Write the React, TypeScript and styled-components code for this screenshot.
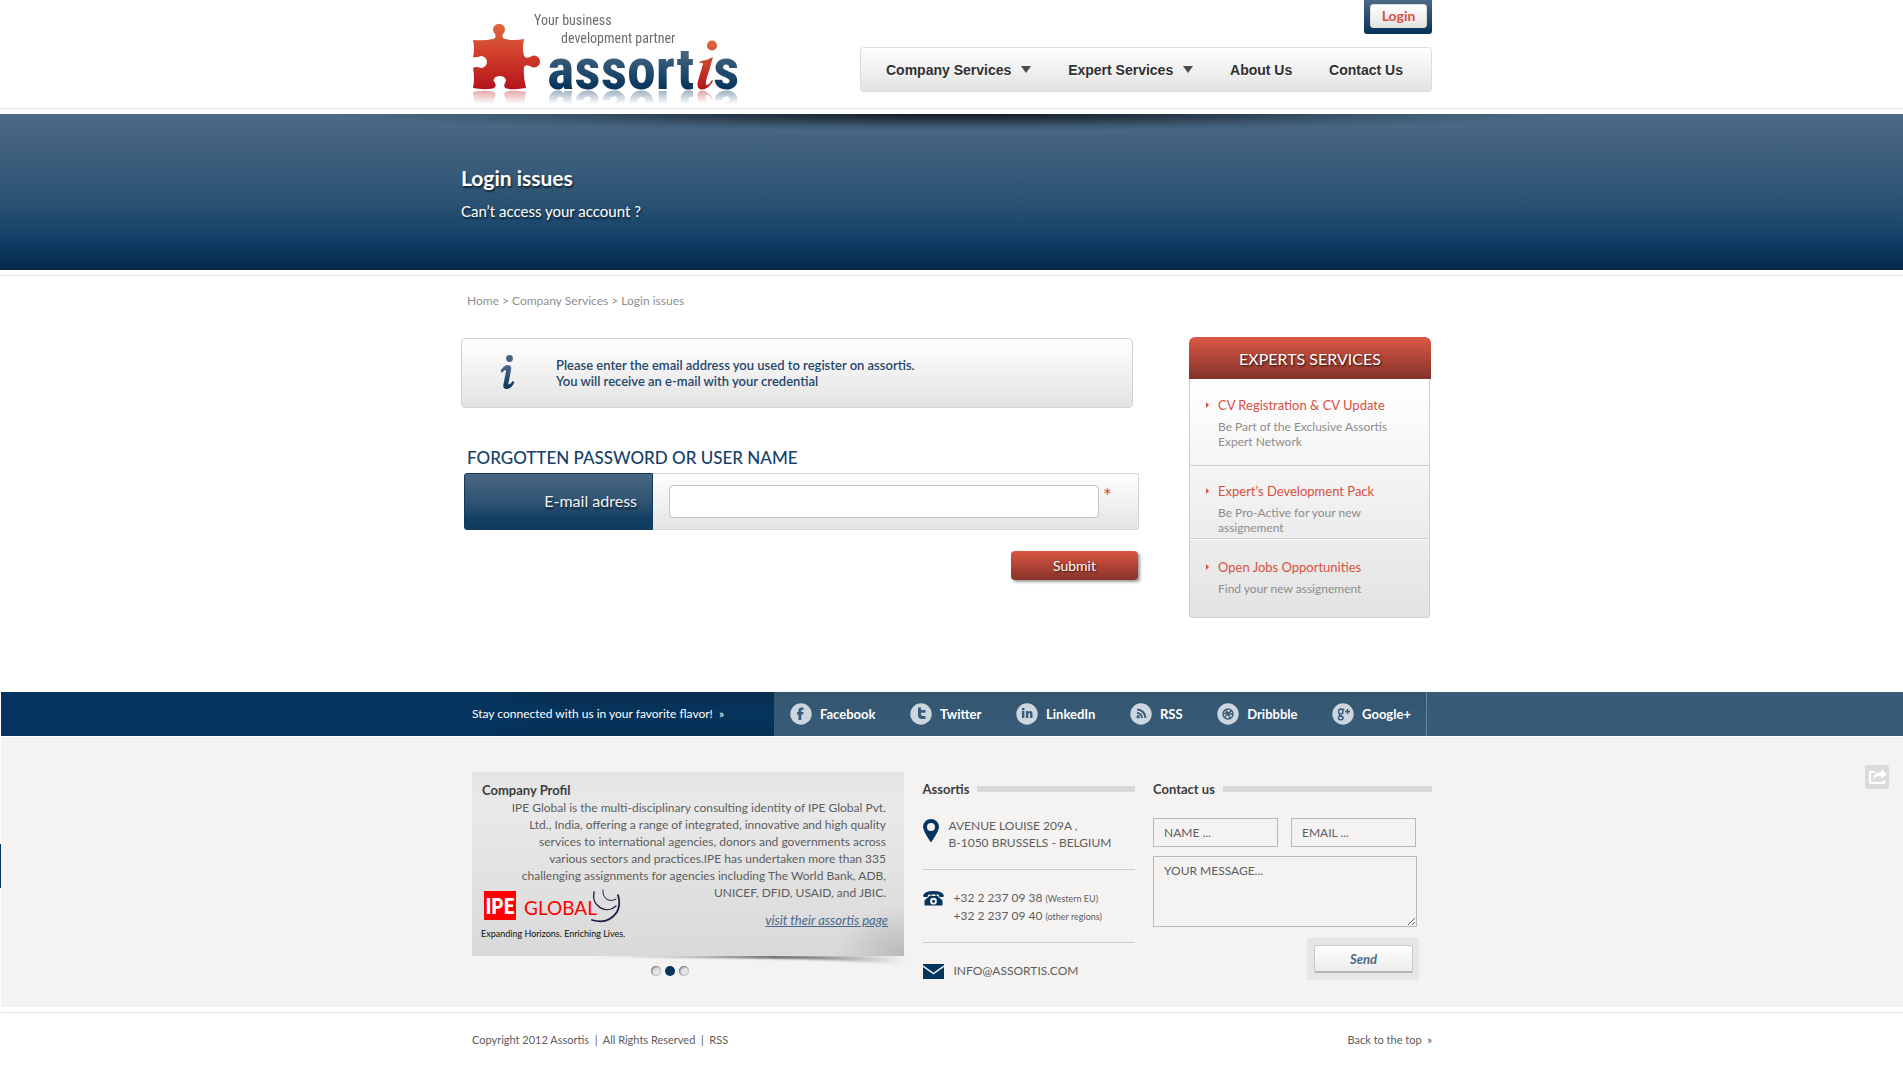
import React from "react";
import styled, { createGlobalStyle } from "styled-components";

const NAVY = "#04355f";
const RED = "#d9503f";
const SANS = `Lato, "Open Sans", sans-serif`;
const NARROW = `"Liberation Sans Narrow", "Roboto Condensed", "DejaVu Sans Condensed", sans-serif`;

const Global = createGlobalStyle`
  *, *::before, *::after { box-sizing: border-box; }
  body { margin: 0; background: #fff; font: 13px/17px ${SANS}; color: #5d5d5d; }
  h1, h2, h3, p, ul, ol, address { margin: 0; padding: 0; font-style: normal; }
  ul, ol { list-style: none; }
  a { color: inherit; text-decoration: none; }
  button, input, textarea { font-family: inherit; }
`;

const Wrap = styled.div`
  width: 100%;
  max-width: 981px;
  margin: 0 auto;
  padding-right: 10px;
`;

/* ---------- header ---------- */
const Header = styled.header`
  border-bottom: 1px solid #e3e3e3;
  height: 109px;
`;
const HeaderRow = styled(Wrap)`
  display: flex;
  justify-content: space-between;
  padding-left: 11px;
`;
const Logo = styled.a`
  display: block;
  height: 108px;
`;
const Reflected = styled.svg`
  display: block;
  overflow: visible;
  -webkit-box-reflect: below 0 linear-gradient(transparent 84%, rgba(0, 0, 0, 0.4));
`;
const HeaderSide = styled.div`
  display: flex;
  flex-direction: column;
  align-items: flex-end;
  gap: 13px;
`;
const LoginTab = styled.div`
  padding: 4px 5px 6px 6px;
  border-radius: 0 0 3px 3px;
  background: linear-gradient(#4a6986, #04325a);
`;
const LoginButton = styled.button`
  display: block;
  width: 57px;
  height: 24px;
  padding: 0;
  border: 1px solid #ddd;
  border-radius: 3px;
  background: linear-gradient(#fff, #e4e4e4);
  color: ${RED};
  font: bold 14px/20px ${SANS};
`;
const Nav = styled.nav`
  display: flex;
  justify-content: space-between;
  align-items: center;
  width: 572px;
  height: 45px;
  padding: 0 28px 0 25px;
  border: 1px solid #dcdcdc;
  border-radius: 4px;
  background: linear-gradient(#fff, #e2e2e2);
  color: #2f2f2f;
  font: bold 14px/20px "Liberation Sans", Arial, sans-serif;
`;
const NavLink = styled.a<{ $menu?: boolean }>`
  display: flex;
  align-items: center;
  gap: 10px;
  text-shadow: 0 1px 0 #fff;
  ${(p) =>
    p.$menu &&
    `&::after { content: ""; border: 5px solid transparent; border-top: 7px solid #4a4a4a; border-bottom: 0; }`}
`;

/* ---------- banner ---------- */
const Banner = styled.section`
  height: 156px;
  margin-top: 5px;
  padding-top: 50px;
  color: #fff;
  background:
    radial-gradient(ellipse 620px 17px at 50% 0, rgba(12, 18, 26, 0.9), rgba(12, 18, 26, 0.6) 35%, rgba(12, 18, 26, 0.2) 70%, transparent),
    linear-gradient(#4c6b87, #3f607d 25%, #2d5474 52%, #1a466c 74%, #0d3a60 84%, #042848);
  text-shadow: 1px 2px 2px rgba(0, 0, 0, 0.6);
`;
const BannerTitle = styled.h1`
  font: bold 21px/28px ${SANS};
`;
const BannerText = styled.p`
  margin-top: 8px;
  font-size: 15px;
  line-height: 22px;
`;

/* ---------- main ---------- */
const Main = styled.main`
  margin-top: 5px;
  border-top: 1px solid #e3e3e3;
  min-height: 417px;
  padding-top: 16px;
`;
const Crumbs = styled.ol`
  display: flex;
  gap: 3px;
  padding-left: 6px;
  color: #8f8f8f;
  font-size: 12px;
  line-height: 18px;
  li + li::before { content: "> "; }
`;
const Columns = styled.div`
  display: grid;
  grid-template-columns: minmax(0, 1fr) 242px;
  column-gap: 50px;
  align-items: start;
  margin-top: 27px;
  padding-right: 1px;
`;
const Notice = styled.div`
  display: flex;
  align-items: center;
  gap: 39px;
  height: 70px;
  margin: 1px 6px 0 0;
  padding-left: 38px;
  border: 1px solid #d2d2d2;
  border-radius: 4px;
  background: linear-gradient(#fff, #e3e3e3);
  color: #1f476b;
  font-size: 13px;
  line-height: 16px;
  font-weight: 600;
`;
const FormTitle = styled.h2`
  margin: 39px 0 4px 6px;
  color: #16416a;
  font: 500 17px/22px ${SANS};
`;
const FieldRow = styled.div`
  display: grid;
  grid-template-columns: 189px 430px 1fr;
  margin-left: 3px;
  height: 57px;
  border-radius: 3px;
  background: linear-gradient(#fff, #e4e4e4);
  border: 1px solid #d4d4d4;
  border-left: 0;
  column-gap: 16px;
`;
const FieldLabel = styled.label`
  height: 57px;
  margin-top: -1px;
  padding-right: 15px;
  border: 1px solid #123a5e;
  border-radius: 3px 0 0 3px;
  background: linear-gradient(#4a6680, #2f5473 50%, #143f64 80%, #0f3a60);
  color: #f2f2f2;
  font-size: 16px;
  line-height: 54px;
  text-align: right;
  text-shadow: 1px 2px 2px rgba(0, 0, 0, 0.6);
`;
const FieldInput = styled.input`
  height: 33px;
  margin-top: 11px;
  padding: 0 8px;
  border: 1px solid #c4c4c4;
  border-radius: 4px;
  background: #fff;
  font-size: 14px;
`;
const Required = styled.span`
  margin: 10px 0 0 -12px;
  color: ${RED};
  font-size: 21px;
  line-height: 24px;
`;
const SubmitButton = styled.button`
  display: block;
  width: 127px;
  height: 29px;
  margin: 21px 1px 0 auto;
  padding: 0;
  border: 0;
  border-radius: 4px;
  background: linear-gradient(#da5542, #87332a);
  box-shadow: 2px 2px 3px rgba(0, 0, 0, 0.4);
  color: #fff;
  font-size: 14px;
  line-height: 28px;
  text-shadow: 1px 1px 2px rgba(0, 0, 0, 0.7);
`;
const Side = styled.aside`
  padding-right: 1px;
`;
const SideTitle = styled.h2`
  height: 42px;
  margin-right: -1px;
  border-radius: 6px 6px 0 0;
  background: linear-gradient(#dc5844, #83322a);
  color: #fff;
  font: 16px/44px ${SANS};
  text-align: center;
  text-shadow: 1px 1px 2px rgba(0, 0, 0, 0.8);
`;
const SideList = styled.ul`
  border: 1px solid #d0d0d0;
  border-top: 0;
  border-radius: 0 0 4px 4px;
  background: linear-gradient(#fff, #e3e3e3);
`;
const SideItem = styled.li<{ $h: number; $top: number }>`
  position: relative;
  height: ${(p) => p.$h}px;
  padding: ${(p) => p.$top}px 30px 0 28px;
  color: #8c8c8c;
  font-size: 12px;
  line-height: 15px;
  & + & { border-top: 1px solid #cfcfcf; box-shadow: inset 0 1px 0 #fafafa; }
  &::before {
    content: "";
    position: absolute;
    left: 16px;
    top: ${(p) => p.$top + 6}px;
    border: 3px solid transparent;
    border-left-color: ${RED};
    border-right: 0;
  }
`;
const SideLink = styled.a`
  display: block;
  margin-bottom: 5px;
  color: ${RED};
  font-size: 13px;
  line-height: 18px;
`;

/* ---------- social bar ---------- */
const Footer = styled.footer`
  position: relative;
  border-left: 1px solid #fff;
`;
const FooterWrap = styled(Wrap)`
  max-width: 982px;
  padding-right: 11px;
`;
const SocialBar = styled.div`
  background: linear-gradient(90deg, #04345f 50%, #375b79 50%);
`;
const SocialRow = styled(FooterWrap)`
  display: grid;
  grid-template-columns: 313px 1fr;
  height: 44px;
  background: linear-gradient(90deg, #04345f, rgba(4, 52, 95, 0) 100px), linear-gradient(#0a2f50, #04345c 50%, #062f52);
`;
const Stay = styled.p`
  padding-left: 11px;
  color: #fff;
  font-size: 12px;
  line-height: 43px;
`;
const SocialList = styled.ul`
  display: flex;
  justify-content: space-between;
  align-items: center;
  margin-right: -11px;
  padding: 0 32px 0 16px;
  background:
    linear-gradient(90deg, transparent 652px, #6c879d 652px, #6c879d 653px, #375b79 653px),
    linear-gradient(#34566f, #375b79);
`;
const SocialLink = styled.a`
  display: flex;
  align-items: center;
  gap: 8px;
  color: #fff;
  font: bold 13px/20px ${SANS};
`;

/* ---------- footer ---------- */
const FooterMain = styled.div`
  margin-top: 1px;
  height: 270px;
  padding-top: 35px;
  background: #f5f3f2;
`;
const FooterGrid = styled(FooterWrap)`
  display: grid;
  grid-template-columns: 432px 212px 279px;
  justify-content: space-between;
  padding-left: 11px;
`;
const CardBox = styled.div`
  position: relative;
`;
const Card = styled.article`
  position: relative;
  height: 184px;
  padding: 10px 18px 0 10px;
  background:
    radial-gradient(ellipse 70px 50px at 100% 100%, #b9b9b9, transparent),
    linear-gradient(#e4e4e4, #e9e9e9 20%, #d9d9d9);
`;
const CardShadow = styled.svg`
  position: absolute;
  left: 100px;
  top: 184px;
`;
const CardTitle = styled.h3`
  color: #3c3c3c;
  font: bold 13px/17px ${SANS};
`;
const CardText = styled.p`
  font-size: 12px;
  text-align: right;
  white-space: nowrap;
`;
const CardLink = styled.a`
  display: block;
  margin: 11px -2px 0 0;
  color: #48688a;
  font-size: 13px;
  font-style: italic;
  text-align: right;
  text-decoration: underline;
`;
const Partner = styled.svg`
  position: absolute;
  left: 8px;
  top: 114px;
`;
const Dots = styled.div`
  display: flex;
  gap: 4px;
  justify-content: center;
  margin-top: 10px;
  padding-right: 36px;
`;
const Dot = styled.button<{ $on?: boolean }>`
  width: 10px;
  height: 10px;
  padding: 0;
  border: 0;
  border-radius: 50%;
  background: ${(p) => (p.$on ? NAVY : "#e4e4e4")};
  box-shadow: ${(p) => (p.$on ? "none" : "inset 1px 1px 2px #777, inset 0 0 1px #888")};
`;
const ColTitle = styled.h3`
  display: flex;
  align-items: center;
  gap: 8px;
  margin-top: 8px;
  color: #3c3c3c;
  font: bold 13px/18px ${SANS};
  &::after { content: ""; flex: 1; height: 6px; background: #d8d6d7; }
`;
const Info = styled.address<{ $h: number }>`
  display: flex;
  align-items: flex-start;
  gap: 10px;
  height: ${(p) => p.$h}px;
  padding-top: 19px;
  font-size: 12px;
  & + & { border-top: 1px solid #cbcbcb; }
  svg { flex: none; margin-top: 2px; }
  small { font-size: 9px; }
`;
const ContactForm = styled.form`
  display: grid;
  grid-template-columns: 125px 125px;
  column-gap: 13px;
  row-gap: 9px;
  margin-top: 20px;
`;
const boxed = `
  border: 1px solid #b9b9b9;
  border-radius: 0;
  background: transparent;
  color: #5d5d5d;
  font-size: 12px;
  &::placeholder { color: #5d5d5d; opacity: 1; }
`;
const TextInput = styled.input`
  ${boxed}
  height: 29px;
  padding: 0 10px;
`;
const Message = styled.textarea`
  ${boxed}
  grid-column: 1 / -1;
  width: 264px;
  height: 71px;
  padding: 5px 10px;
  line-height: 17px;
`;
const SendFrame = styled.div`
  grid-column: 1 / -1;
  width: 112px;
  margin: 2px 0 0 154px;
  padding: 7px 6px 7px 7px;
  border-radius: 2px;
  background: #e8e6e5;
`;
const SendButton = styled.button`
  display: block;
  width: 99px;
  height: 28px;
  padding: 0;
  border: 1px solid #c9c9c9;
  border-bottom: 2px solid #b4b4b4;
  border-radius: 2px;
  background: linear-gradient(#fff, #ececec);
  color: #4c6a86;
  font: italic bold 13px/24px ${SANS};
`;
const Legal = styled.div`
  margin-top: 5px;
  border-top: 1px solid #e3e3e3;
  font-size: 11px;
  line-height: 18px;
`;
const LegalRow = styled(FooterWrap)`
  display: flex;
  justify-content: space-between;
  padding: 18px 11px 16px 11px;
`;
const EdgeTab = styled.span`
  position: absolute;
  left: -1px;
  top: 152px;
  width: 1px;
  height: 44px;
  background: ${NAVY};
`;
const ShareButton = styled.button`
  position: absolute;
  right: 14px;
  top: 73px;
  width: 24px;
  height: 24px;
  padding: 0;
  border: 0;
  border-radius: 3px;
  background: #dcdadb;
  svg { display: block; }
`;

const LogoArt = () => (
  <Reflected width="268" height="90" viewBox="0 0 268 90" role="img" aria-label="assortis">
    <defs>
      <linearGradient id="lr" x1="0" y1="24" x2="0" y2="90" gradientUnits="userSpaceOnUse">
        <stop offset="0" stopColor="#e0673d" />
        <stop offset=".5" stopColor="#cf3a2b" />
        <stop offset="1" stopColor="#b3131b" />
      </linearGradient>
      <linearGradient id="lb" x1="0" y1="48" x2="0" y2="90" gradientUnits="userSpaceOnUse">
        <stop offset="0" stopColor="#4c6b87" />
        <stop offset="1" stopColor="#04325a" />
      </linearGradient>
      <linearGradient id="li" x1="0" y1="40" x2="0" y2="90" gradientUnits="userSpaceOnUse">
        <stop offset="0" stopColor="#e0673d" />
        <stop offset="1" stopColor="#b3131b" />
      </linearGradient>
    </defs>
    <path
      fill="url(#lr)"
      d="M1 40 Q12 41 21 39 Q25 38 23 34 Q21 32 21 29.500 A6 5.800 0 0 1 33 29.500 Q33 32 31 34 Q29 38 33 39 Q42 41 52 39 Q50 49 52 56 Q54 59 58 57 Q60 55.500 62 55.500 A6 6 0 0 1 62 67.500 Q60 67.500 58 66 Q54 64 52 67 Q51 76 54 88 Q44 90 34 88.500 Q31 87 33 83 Q34 81 34 80 A6.500 5.500 0 0 0 21.500 80 Q21.500 81 23 83 Q25 87 21 88.500 Q10 90 1 88 Q3 78 1 68 Q4 66 9 68 A6 6 0 0 0 9 56 Q4 58 1 57 Q3 48 1 40Z"
    />
    <g fontFamily={NARROW} fill="#6c6c6c" fontSize="14">
      <text x="62" y="25">Your business</text>
      <text x="89" y="43">development partner</text>
    </g>
    <g fontFamily={NARROW} fontWeight="bold" fontSize="58" fill="url(#lb)">
      <text x="75" y="89">assort</text>
      <text x="241" y="89">s</text>
    </g>
    <circle cx="240" cy="45.500" r="5" fill="url(#li)" />
    <path fill="url(#li)" d="M229 61 Q236 60 241 57 Q238 68 234.500 79 Q233 85 235 85 Q237 85 240 80 L241 81 Q236 90 229 89.500 Q224 88 226 81 L231 64 Q231 62 227 63Z" />
  </Reflected>
);

const InfoIcon = () => (
  <svg width="17" height="38" viewBox="0 0 17 38" aria-hidden="true">
    <defs>
      <linearGradient id="ii" x1="0" y1="0" x2="0" y2="1">
        <stop offset="0" stopColor="#4c6b87" />
        <stop offset="1" stopColor="#0a355b" />
      </linearGradient>
    </defs>
    <circle cx="9.500" cy="4.500" r="3.400" fill="#45647f" />
    <path fill="url(#ii)" d="M.5 17 Q3.500 11.500 7.500 11 Q12 11 11 16 L8.500 29 Q8.300 31 10 30 Q11.500 29 12.500 27 L14.500 28 Q11.500 35 6.500 35 Q2.500 35 3.500 30 L6 17.500 Q6 15 4 16.500 L2 19Z" />
  </svg>
);

const glyphs: Record<string, React.ReactNode> = {
  Facebook: <path d="M8.500 17v-5.500H7V9h1.500V7.500C8.500 5 10 4 13.500 4.600v2.200c-2-.2-2.200.2-2.200 2.200h2.200l-.4 2.500h-1.800V17z" />,
  Twitter: <path d="M8 4.500h3V7h4.500v2.800H11v1.200q0 2 2 2h2.500v3H12q-4 0-4-4z" />,
  LinkedIn: (
    <path d="M6 5h2.400v2.200H6zM6 8h2.400v7H6zM10 8h2.300v1c1-1.500 4.200-1.600 4.200 1.800V15h-2.400v-3.500c0-2-1.800-1.900-1.800 0V15H10z" />
  ),
  RSS: (
    <g fill="none" stroke="#375b79" strokeWidth="2">
      <path d="M7 6.500a8.500 8.500 0 0 1 8.500 8.500M7 10a5 5 0 0 1 5 5" />
      <circle cx="8.200" cy="13.800" r=".7" />
    </g>
  ),
  Dribbble: (
    <g fill="none" stroke="#375b79" strokeWidth="1.400">
      <circle cx="11" cy="11" r="5" />
      <path d="M6 10.500c4 0 7-.8 9-3M8.500 6.800c2.500 2.500 3.800 5 4.500 8.700M7.500 14.500c1.500-3 4.500-4.200 8.500-3.200" />
    </g>
  ),
  "Google+": (
    <g fill="none" stroke="#375b79" strokeWidth="1.400">
      <ellipse cx="8.800" cy="8.500" rx="2.200" ry="2.500" />
      <path d="M8 11q-1.500 1 0 1.800 3.500.7 3.200 2.400-.5 1.800-2.800 1.600-2.300-.2-2-2 .3-1.300 2-1.800M10.500 6.500h1.700M15.500 6v5M13 8.500h5" />
    </g>
  ),
};

const SocialIcon = ({ name }: { name: string }) => (
  <svg width="22" height="22" viewBox="0 0 22 22" fill="#375b79" aria-hidden="true">
    <circle cx="11" cy="11" r="10.700" fill="#cdd6de" />
    {glyphs[name]}
  </svg>
);

const PartnerLogo = () => (
  <Partner width="150" height="60" viewBox="0 0 150 60" role="img" aria-label="IPE Global">
    <rect x="4" y="5" width="32" height="29" fill="#f00" />
    <text x="20" y="28" textAnchor="middle" fill="#fff" fontFamily={NARROW} fontWeight="bold" fontSize="22">
      IPE
    </text>
    <text x="44" y="29" fill="#f00" fontFamily={SANS} fontSize="19">
      GLOBAL
    </text>
    <g fill="none" stroke="#1b1b45" strokeLinecap="round">
      <path d="M138 9Q141 18 137 26Q128 39 112 34" strokeWidth="1.800" />
      <path d="M114 6C111 20 126 29 136 20" strokeWidth="1.400" />
      <path d="M123 4C122 13 130 17 136 13" strokeWidth="1" />
    </g>
    <text x="1" y="51" fill="#111" fontFamily={SANS} fontSize="9">
      Expanding Horizons. Enriching Lives.
    </text>
  </Partner>
);

const services = [
  { title: "CV Registration & CV Update", text: "Be Part of the Exclusive Assortis Expert Network", h: 86, top: 17 },
  { title: "Expert’s Development Pack", text: "Be Pro-Active for your new assignement", h: 73, top: 16 },
  { title: "Open Jobs Opportunities", text: "Find your new assignement", h: 79, top: 19 },
];

export default function App() {
  return (
    <>
      <Global />
      <Header>
        <HeaderRow>
          <Logo href="#">
            <LogoArt />
          </Logo>
          <HeaderSide>
            <LoginTab>
              <LoginButton type="button">Login</LoginButton>
            </LoginTab>
            <Nav>
              <NavLink href="#" $menu>Company Services</NavLink>
              <NavLink href="#" $menu>Expert Services</NavLink>
              <NavLink href="#">About Us</NavLink>
              <NavLink href="#">Contact Us</NavLink>
            </Nav>
          </HeaderSide>
        </HeaderRow>
      </Header>

      <Banner>
        <Wrap>
          <BannerTitle>Login issues</BannerTitle>
          <BannerText>Can’t access your account ?</BannerText>
        </Wrap>
      </Banner>

      <Main>
        <Wrap>
          <Crumbs>
            <li><a href="#">Home</a></li>
            <li><a href="#">Company Services</a></li>
            <li>Login issues</li>
          </Crumbs>
          <Columns>
            <div>
              <Notice>
                <InfoIcon />
                <p>
                  Please enter the email address you used to register on assortis.
                  <br />
                  You will receive an e-mail with your credential
                </p>
              </Notice>
              <form onSubmit={(e) => e.preventDefault()}>
                <FormTitle>FORGOTTEN PASSWORD OR USER NAME</FormTitle>
                <FieldRow>
                  <FieldLabel htmlFor="email">E-mail adress</FieldLabel>
                  <FieldInput id="email" type="email" />
                  <Required>*</Required>
                </FieldRow>
                <SubmitButton type="submit">Submit</SubmitButton>
              </form>
            </div>
            <Side>
              <SideTitle>EXPERTS SERVICES</SideTitle>
              <SideList>
                {services.map((s) => (
                  <SideItem key={s.title} $h={s.h} $top={s.top}>
                    <SideLink href="#">{s.title}</SideLink>
                    <p>{s.text}</p>
                  </SideItem>
                ))}
              </SideList>
            </Side>
          </Columns>
        </Wrap>
      </Main>

      <Footer>
        <SocialBar>
          <SocialRow>
            <Stay>Stay connected with us in your favorite flavor!&nbsp; »</Stay>
            <SocialList>
              {Object.keys(glyphs).map((name) => (
                <li key={name}>
                  <SocialLink href="#">
                    <SocialIcon name={name} />
                    {name}
                  </SocialLink>
                </li>
              ))}
            </SocialList>
          </SocialRow>
        </SocialBar>
        <FooterMain>
          <FooterGrid>
            <CardBox>
              <Card>
                <CardTitle>Company Profil</CardTitle>
                <CardText>
                  IPE Global is the multi-disciplinary consulting identity of IPE Global Pvt.<br />
                  Ltd., India, offering a range of integrated, innovative and high quality<br />
                  services to international agencies, donors and governments across<br />
                  various sectors and practices.IPE has undertaken more than 335<br />
                  challenging assignments for agencies including The World Bank, ADB,<br />
                  UNICEF, DFID, USAID, and JBIC.
                </CardText>
                <CardLink href="#">visit their assortis page</CardLink>
                <PartnerLogo />
              </Card>
              <CardShadow width="340" height="14" viewBox="0 0 340 14" aria-hidden="true">
                <defs>
                  <linearGradient id="cs" x1="0" x2="1" y1="0" y2="0">
                    <stop offset="0" stopColor="#222" stopOpacity="0" />
                    <stop offset=".6" stopColor="#222" stopOpacity=".95" />
                    <stop offset="1" stopColor="#777" stopOpacity="0" />
                  </linearGradient>
                  <filter id="blur"><feGaussianBlur stdDeviation="1" /></filter>
                </defs>
                <path d="M0 0H334V9Q260 3 180 2Z" fill="url(#cs)" filter="url(#blur)" />
              </CardShadow>
              <Dots>
                <Dot type="button" aria-label="Slide 1" />
                <Dot type="button" aria-label="Slide 2" $on />
                <Dot type="button" aria-label="Slide 3" />
              </Dots>
            </CardBox>

            <div>
              <ColTitle>Assortis</ColTitle>
              <Info $h={71}>
                <svg width="16" height="24" viewBox="0 0 16 24" aria-hidden="true">
                  <path fill={NAVY} fillRule="evenodd" d="M8 0a8 8 0 0 1 8 8q0 4-8 15.500Q0 12 0 8a8 8 0 0 1 8-8zm0 4a4 4 0 1 0 0 8 4 4 0 0 0 0-8z" />
                </svg>
                <p>AVENUE LOUISE 209A ,<br />B-1050 BRUSSELS - BELGIUM</p>
              </Info>
              <Info $h={73}>
                <svg width="21" height="15" viewBox="0 0 21 15" aria-hidden="true">
                  <path fill={NAVY} fillRule="evenodd" d="M0 5Q1 0 10.500 0T21 5L20 6h-3.500L15.500 3.500h-2V5h1l5 4.500V14.500h-18V9.500l5-4.500h1V3.500h-2L4.500 6H1zM8.500 3.500V5h4V3.500zM10.500 6.800a3.400 3.400 0 1 0 0 6.800 3.400 3.400 0 0 0 0-6.800zm0 1.900a1.500 1.500 0 1 1 0 3 1.500 1.500 0 0 1 0-3z" />
                </svg>
                <p>
                  +32 2 237 09 38 <small>(Western EU)</small>
                  <br />
                  +32 2 237 09 40 <small>(other regions)</small>
                </p>
              </Info>
              <Info $h={50}>
                <svg width="21" height="15" viewBox="0 0 21 15" aria-hidden="true">
                  <path fill={NAVY} d="M0 0h21v15H0z" />
                  <path fill="none" stroke="#f5f3f2" strokeWidth="1.500" d="M0 2l10.500 7.500L21 2" />
                </svg>
                <a href="#">INFO@ASSORTIS.COM</a>
              </Info>
            </div>

            <div>
              <ColTitle>Contact us</ColTitle>
              <ContactForm onSubmit={(e) => e.preventDefault()}>
                <TextInput aria-label="Name" placeholder="NAME ..." />
                <TextInput aria-label="Email" placeholder="EMAIL ..." />
                <Message aria-label="Your message" placeholder="YOUR MESSAGE..." />
                <SendFrame>
                  <SendButton type="submit">Send</SendButton>
                </SendFrame>
              </ContactForm>
            </div>
          </FooterGrid>
        </FooterMain>
        <Legal>
          <LegalRow>
            <p>Copyright 2012 Assortis &nbsp;|&nbsp; All Rights Reserved &nbsp;|&nbsp; <a href="#">RSS</a></p>
            <a href="#">Back to the top &nbsp;»</a>
          </LegalRow>
        </Legal>
        <EdgeTab />
        <ShareButton type="button" aria-label="Share">
          <svg width="24" height="24" viewBox="0 0 24 24" aria-hidden="true">
            <path d="M10 7H5v11h14v-3" fill="none" stroke="#fff" strokeWidth="2" />
            <path d="M8 14q1-7 8-7V4l6 5-6 5v-3q-5 0-8 3z" fill="#fff" />
          </svg>
        </ShareButton>
      </Footer>
    </>
  );
}
